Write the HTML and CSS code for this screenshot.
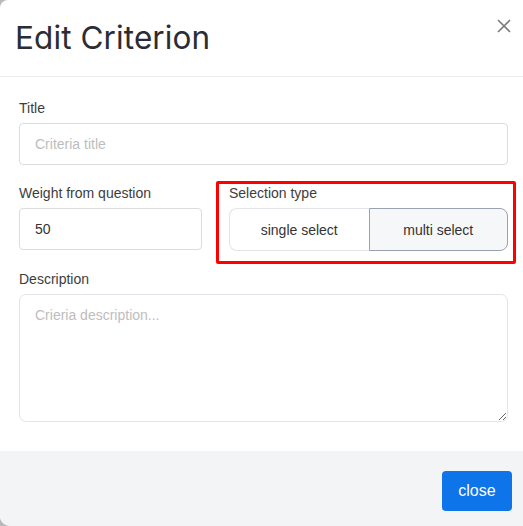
FILE: index.html
```html
<!DOCTYPE html>
<html>
<head>
<meta charset="utf-8">
<link rel="stylesheet" href="styles.css">
</head>
<body>
<div class="modal">
  <div class="modal-header">
    <h1 class="modal-title">Edit Criterion</h1>
    <button class="x-btn" aria-label="Close">
      <svg width="14" height="14" viewBox="0 0 14 14"><path d="M1 1L13 13M13 1L1 13" stroke="#7b7b7b" stroke-width="1.6" fill="none"/></svg>
    </button>
  </div>
  <div class="modal-body">
    <div class="field">
      <label class="label">Title</label>
      <input class="input" type="text" placeholder="Criteria title">
    </div>
    <div class="row">
      <div class="field left-cell">
        <label class="label">Weight from question</label>
        <input class="input" type="text" value="50">
      </div>
      <div class="field highlight">
        <label class="label">Selection type</label>
        <div class="toggle">
          <button class="toggle-btn">single select</button>
          <button class="toggle-btn active">multi select</button>
        </div>
      </div>
    </div>
    <div class="field">
      <label class="label">Description</label>
      <textarea class="textarea" placeholder="Crieria description..."></textarea>
    </div>
  </div>
  <div class="modal-footer">
    <button class="close-btn">close</button>
  </div>
</div>
</body>
</html>
```
FILE: styles.css
```css
html, body {
  margin: 0;
  padding: 0;
  height: 100%;
  overflow: hidden;
  background: #b9b9b9;
}
.modal {
  width: 527px;
  height: 526px;
  background: #fff;
  border-radius: 8px 0 0 10px;
  overflow: hidden;
  display: flex;
  flex-direction: column;
  font-family: "Liberation Sans", Arial, sans-serif;
}
.modal-header {
  height: 77px;
  flex-shrink: 0;
  box-sizing: border-box;
  border-bottom: 1px solid #ececec;
  display: flex;
  align-items: flex-start;
  justify-content: space-between;
  padding: 0 16px 0 15px;
}
.modal-title {
  margin: 0;
  margin-top: 18px;
  font-family: Inter, "Open Sans", sans-serif;
  font-weight: 400;
  font-size: 31.5px;
  letter-spacing: 0.1px;
  color: #2c2c34;
  line-height: 40px;
}
.x-btn {
  margin-top: 19px;
  padding: 0;
  border: 0;
  background: none;
  width: 14px;
  height: 14px;
  display: block;
}
.x-btn svg { display: block; }
.modal-body {
  padding: 23px 19px 0 19px;
  display: flex;
  flex-direction: column;
  gap: 13px;
  flex: 1;
  min-height: 0;
}
.field {
  display: flex;
  flex-direction: column;
}
.label {
  font-size: 14px;
  line-height: 16px;
  color: #3d3d3d;
  margin-bottom: 7px;
}
.input {
  height: 42px;
  box-sizing: border-box;
  border: 1.5px solid #dcdcdc;
  border-radius: 4px;
  padding: 0 15px;
  font-family: "Liberation Sans", Arial, sans-serif;
  font-size: 14px;
  color: #333;
  outline: none;
}
.input::placeholder, .textarea::placeholder {
  color: #bdbdbd;
}
.row {
  display: grid;
  grid-template-columns: 183px 1fr;
  column-gap: 14px;
  margin-right: -8px;
  margin-top: 3px;
  margin-bottom: -6px;
}
.left-cell {
  padding-top: 4px;
}
.highlight {
  border: 3px solid #ff0000;
  padding: 1px 5px 10px 10px;
  border-radius: 2px;
}
.toggle {
  display: grid;
  grid-template-columns: 1fr 1fr;
  height: 43px;
}
.toggle-btn {
  font-family: "Liberation Sans", Arial, sans-serif;
  font-size: 14px;
  color: #333;
  background: #fff;
  border: 1px solid #e3e3ea;
  margin: 0;
  padding: 0;
}
.toggle-btn:first-child {
  border-radius: 8px 0 0 8px;
  border-right: 0;
}
.toggle-btn.active {
  background: #f6f7f9;
  border: 1px solid #9aa1af;
  border-radius: 0 8px 8px 0;
}
.textarea {
  height: 128px;
  box-sizing: border-box;
  border: 1.5px solid #e3e3ea;
  border-radius: 7px;
  padding: 12px 15px;
  font-family: "Liberation Sans", Arial, sans-serif;
  font-size: 14px;
  resize: vertical;
  outline: none;
}
.modal-footer {
  height: 75px;
  flex-shrink: 0;
  box-sizing: border-box;
  background: #f3f4f6;
  display: flex;
  justify-content: flex-end;
  align-items: flex-start;
  padding: 20px 15px 0 0;
}
.close-btn {
  width: 70px;
  height: 40px;
  background: #0d74ea;
  color: #fff;
  border: 0;
  border-radius: 4px;
  font-family: "Liberation Sans", Arial, sans-serif;
  font-size: 16px;
}
```
